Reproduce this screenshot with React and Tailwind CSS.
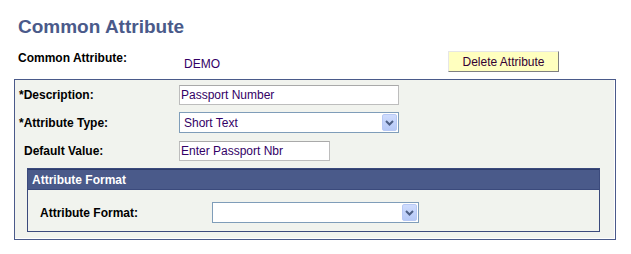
import React from 'react';

const font = { fontFamily: '"Liberation Sans", Arial, sans-serif' };

function Chevron() {
  return (
    <svg width="9" height="6" viewBox="0 0 9 6" className="block">
      <path d="M1 1 L4.5 4.5 L8 1" fill="none" stroke="#4d5f85" strokeWidth="2" />
    </svg>
  );
}

function Select({ value, width }) {
  return (
    <div
      className="flex items-center h-[21px] border border-[#7f9db9] bg-white"
      style={{ width }}
    >
      <div className="flex-1 pl-[4px] text-[12px] leading-[14px] text-[#330066] truncate">{value}</div>
      <div className="mr-[1px] flex items-center justify-center w-[15px] h-[17px] rounded-[2px] border border-[#b8c9f5] bg-gradient-to-b from-[#cfdcfd] to-[#b6c9f7]">
        <Chevron />
      </div>
    </div>
  );
}

function TextInput({ value, width }) {
  return (
    <div
      className="flex items-center h-[20px] border border-[#bdbdbd] border-t-[#a9a9a9] bg-white pl-[1px] text-[12px] leading-[14px] text-[#330066]"
      style={{ width }}
    >
      {value}
    </div>
  );
}

export default function App() {
  return (
    <div className="w-[631px] h-[254px] bg-white overflow-hidden" style={font}>
      <h1 className="pt-[16px] pl-[18px] text-[19px] leading-[22px] font-bold text-[#4a5a8a]">
        Common Attribute
      </h1>

      <div className="mt-[13px] flex items-start h-[21px]">
        <div className="pl-[18px] w-[184px] text-[12px] leading-[14px] font-bold text-black">
          Common Attribute:
        </div>
        <div className="mt-[6px] w-[264px] text-[12px] leading-[14px] text-[#330066]">DEMO</div>
        <button className="w-[111px] h-[21px] bg-[#ffffbf] border border-t-[#e6e6e6] border-l-[#e6e6e6] border-r-[#808080] border-b-[#808080] text-[12px] leading-[14px] text-[#330033]">
          Delete Attribute
        </button>
      </div>

      <div className="mt-[7px] ml-[14px] w-[602px] border border-[#4a5a8a] bg-white">
        <div className="mr-[1px] mb-[1px] bg-[#f1f3ee] pt-[5px] pb-[6px]">
          <div className="flex items-center pl-[4px]">
            <div className="w-[160px] text-[12px] leading-[14px] font-bold text-black">*Description:</div>
            <TextInput value="Passport Number" width={220} />
          </div>
          <div className="mt-[7px] flex items-center pl-[4px]">
            <div className="w-[160px] text-[12px] leading-[14px] font-bold text-black">*Attribute Type:</div>
            <Select value="Short Text" width={220} />
          </div>
          <div className="mt-[8px] flex items-center pl-[4px]">
            <div className="w-[160px] pl-[5px] text-[12px] leading-[14px] font-bold text-black">Default Value:</div>
            <TextInput value="Enter Passport Nbr" width={151} />
          </div>

          <div className="mt-[7px] ml-[12px] w-[573px] border border-[#3b4a7c]">
            <div className="h-[20px] flex items-center pl-[4px] bg-[#4a5a8a] border-t border-t-[#2f3d6b] text-[12px] leading-[14px] font-bold text-white">
              Attribute Format
            </div>
            <div className="border-t border-t-[#3b4a7c] bg-[#f1f3ee] pt-[12px] pb-[8px] flex items-center pl-[12px]">
              <div className="w-[172px] text-[12px] leading-[14px] font-bold text-black">Attribute Format:</div>
              <Select value="" width={207} />
            </div>
          </div>
        </div>
      </div>
    </div>
  );
}
